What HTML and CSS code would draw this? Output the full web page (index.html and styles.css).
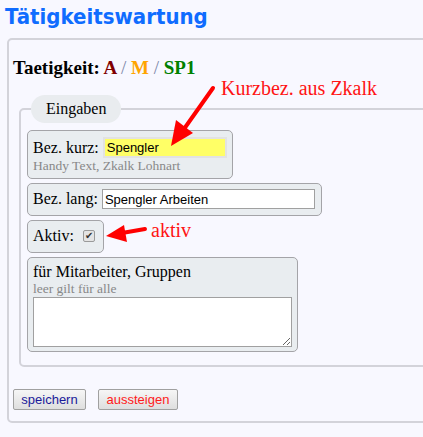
FILE: index.html
```html
<!DOCTYPE html>
<html lang="de">
<head>
<meta charset="utf-8">
<title>Tätigkeitswartung</title>
<link rel="stylesheet" href="styles.css">
</head>
<body>
<h1 class="title">Tätigkeitswartung</h1>
<div class="panel">
  <h2 class="head">Taetigkeit: <span class="c-a">A</span> <span class="sep">/</span> <span class="c-m">M</span> <span class="sep">/</span> <span class="c-sp">SP1</span></h2>
  <fieldset class="group">
    <legend class="legend">Eingaben</legend>
    <div class="box box-kurz">
      <div class="row"><label class="lbl">Bez. kurz:</label><input class="inp inp-kurz" type="text" value="Spengler"></div>
      <div class="hint">Handy Text, Zkalk Lohnart</div>
    </div>
    <div class="box box-lang">
      <div class="row"><label class="lbl">Bez. lang:</label><input class="inp inp-lang" type="text" value="Spengler Arbeiten"></div>
    </div>
    <div class="box box-aktiv">
      <div class="row"><label class="lbl">Aktiv:</label><input class="chk" type="checkbox" checked></div>
    </div>
    <div class="box box-ma">
      <div class="lbl">für Mitarbeiter, Gruppen</div>
      <div class="hint hint-ma">leer gilt für alle</div>
      <textarea class="ta"></textarea>
    </div>
  </fieldset>
  <div class="buttons">
    <button class="btn btn-save">speichern</button>
    <button class="btn btn-exit">aussteigen</button>
  </div>
</div>
<div class="note note-1">Kurzbez. aus Zkalk</div>
<div class="note note-2">aktiv</div>
<svg class="arrows" width="423" height="437" viewBox="0 0 423 437">
  <line x1="213" y1="88" x2="184" y2="129" stroke="#ff0000" stroke-width="4" stroke-linecap="round"/>
  <polygon points="171,146 176,120 193,133" fill="#ff0000"/>
  <line x1="145" y1="229" x2="122" y2="233" stroke="#ff0000" stroke-width="4" stroke-linecap="round"/>
  <polygon points="106,236 124,225 127,242" fill="#ff0000"/>
</svg>
</body>
</html>
```

FILE: styles.css
```css
html, body {
  margin: 0;
  padding: 0;
  overflow: hidden;
  background: #f8f8ff;
  font-family: "Liberation Serif", serif;
}
body {
  position: relative;
  width: 423px;
  height: 437px;
}
.title {
  margin: 0;
  padding: 4px 0 0 5px;
  height: 38px;
  box-sizing: border-box;
  font-family: "DejaVu Sans Condensed", "DejaVu Sans", sans-serif;
  font-stretch: condensed;
  font-weight: bold;
  font-size: 22px;
  line-height: 26px;
  color: #0f6cff;
  white-space: nowrap;
}
.panel {
  margin-left: 7px;
  width: 440px;
  box-sizing: border-box;
  border: 2px solid #d3d3da;
  border-radius: 5px;
  padding: 17px 0 11px 4px;
}
.head {
  margin: 0;
  font-size: 19px;
  font-weight: bold;
  line-height: 22px;
  color: #000;
  white-space: nowrap;
}
.c-a { color: #800000; }
.sep { color: #7c86a8; font-weight: normal; }
.c-m { color: #ffa500; }
.c-sp { color: #008000; }
.group {
  margin: 16px 0 0 6px;
  padding: 7px 0 13px 6px;
  width: 430px;
  box-sizing: border-box;
  border: 2px solid #d3d3da;
  border-radius: 5px;
  min-inline-size: 0;
}
.legend {
  margin-left: 4px;
  padding: 0 15px;
  height: 28px;
  line-height: 28px;
  font-size: 16px;
  background: #e9ecef;
  border-radius: 14px;
}
.box {
  background: #e9edf0;
  border: 1px solid #a4a4a8;
  border-radius: 5px;
  padding: 5px 5px 4px 5px;
  margin-bottom: 4px;
  box-sizing: border-box;
}
.row {
  display: flex;
  align-items: center;
  gap: 4px;
  white-space: nowrap;
}
.lbl {
  font-size: 16px;
  line-height: 20px;
  color: #000;
  white-space: nowrap;
  flex-shrink: 0;
}
.hint {
  font-size: 13.5px;
  line-height: 15px;
  color: #888;
  white-space: nowrap;
}
.hint-ma { line-height: 14px; }
.inp {
  font-family: "Liberation Sans", sans-serif;
  font-size: 13px;
  height: 20px;
  padding: 1px 2px;
  box-sizing: border-box;
  border: 1px solid #a0a0a0;
  background: #fff;
  margin: 0;
  flex-shrink: 0;
}
.inp-kurz {
  width: 124px;
  height: 21px;
  background: #ffff66;
  border: 2px solid #e2e2e2;
}
.inp-lang { width: 213px; }
.box-kurz { width: 206px; height: 49px; padding-top: 6px; }
.box-lang { width: 295px; height: 33px; }
.box-aktiv { width: 77px; height: 33px; }
.box-ma { width: 271px; height: 95px; padding-top: 4px; margin-bottom: 0; }
.chk {
  appearance: none;
  -webkit-appearance: none;
  margin: 0 0 0 5px;
  width: 12px;
  height: 12px;
  box-sizing: border-box;
  border: 1px solid #9a9a9a;
  border-radius: 2px;
  background: #e4e4e4;
  position: relative;
}
.chk:checked::before {
  content: "✔";
  position: absolute;
  left: 1px;
  top: -1px;
  font-family: "DejaVu Sans", sans-serif;
  font-size: 10px;
  line-height: 12px;
  color: #333;
}
.ta {
  display: block;
  margin: 1px 0 0 0;
  width: 259px;
  height: 50px;
  box-sizing: border-box;
  border: 1px solid #a0a0a0;
  background: #fff;
  resize: both;
}
.buttons {
  margin-top: 22px;
  display: flex;
  gap: 12px;
}
.btn {
  font-family: "Liberation Sans", sans-serif;
  font-size: 13px;
  height: 21px;
  padding: 0 6px;
  margin: 0;
  border: 1px solid #a0a0a0;
  border-radius: 2px;
  background: linear-gradient(#f6f6f6, #dedede);
}
.btn-save { color: #1a1a9a; width: 73px; }
.btn-exit { color: #ff1a1a; width: 80px; }
.note {
  position: absolute;
  color: #ff1414;
  font-size: 20px;
  line-height: 22px;
  white-space: nowrap;
}
.note-1 { left: 221px; top: 77px; }
.note-2 { left: 151px; top: 219px; }
.arrows {
  position: absolute;
  left: 0;
  top: 0;
  pointer-events: none;
}
```
